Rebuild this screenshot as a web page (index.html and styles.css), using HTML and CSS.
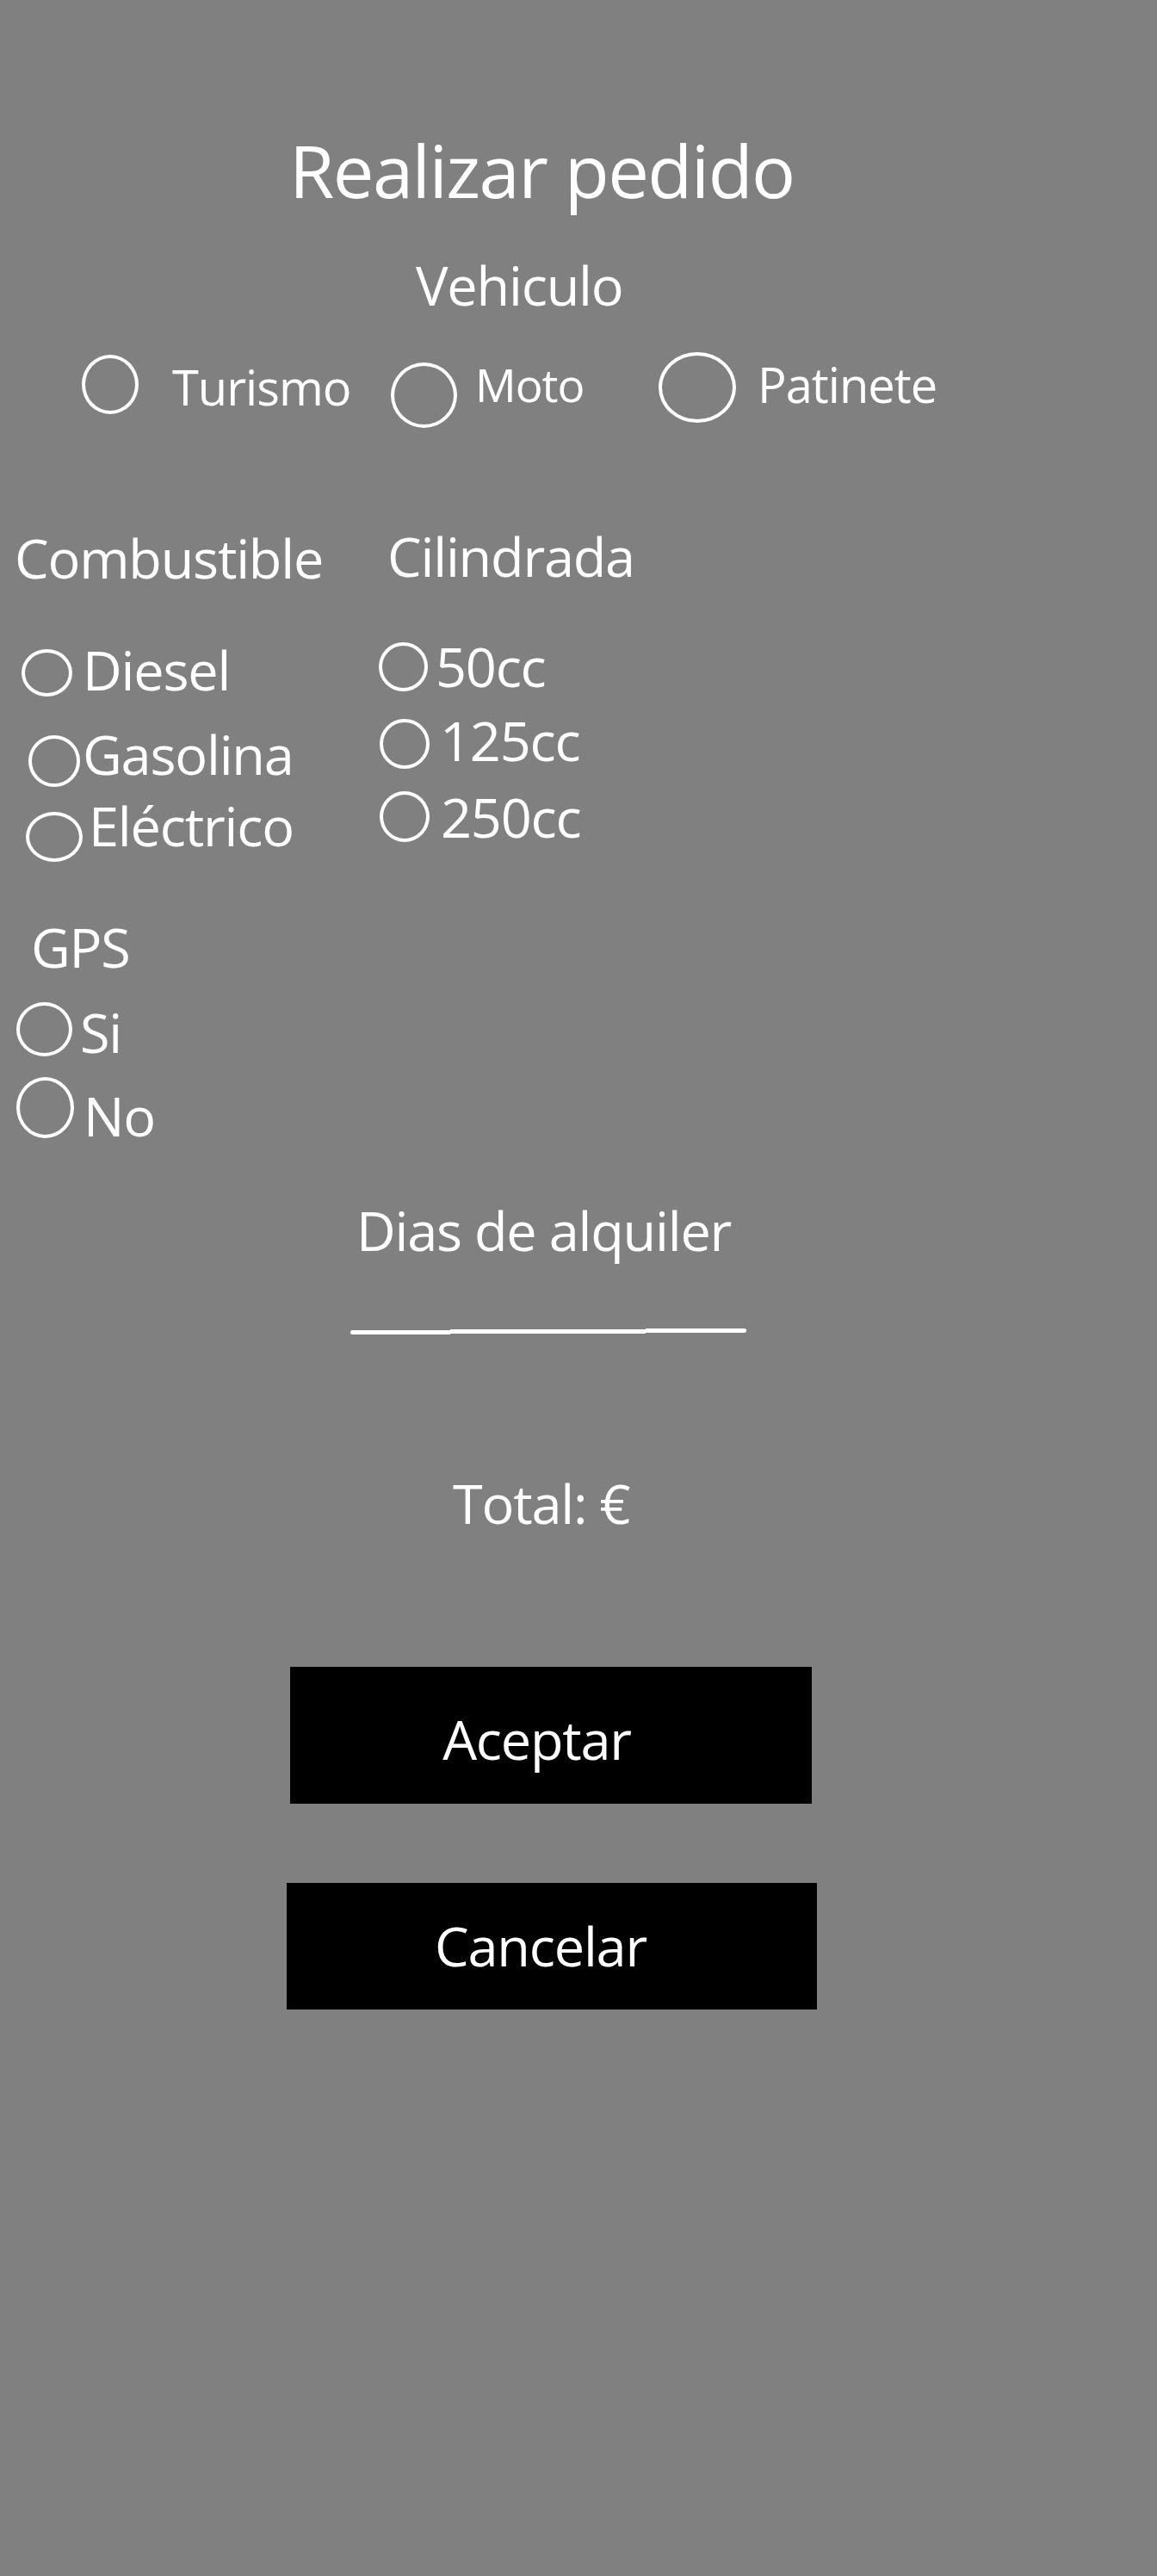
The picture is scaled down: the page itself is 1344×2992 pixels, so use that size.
FILE: index.html
```html
<!DOCTYPE html>
<html lang="es">
<head>
<meta charset="utf-8">
<title>Realizar pedido</title>
<link rel="stylesheet" href="styles.css">
</head>
<body>
<main class="page">
  <h1 class="title">Realizar pedido</h1>

  <section class="vehiculo">
    <h2 class="label label-vehiculo">Vehiculo</h2>
    <div class="veh-row">
      <div class="veh-opt veh-opt-1">
        <span class="radio r-turismo"></span>
        <span class="opt-text t-turismo">Turismo</span>
      </div>
      <div class="veh-opt veh-opt-2">
        <span class="radio r-moto"></span>
        <span class="opt-text t-moto">Moto</span>
      </div>
      <div class="veh-opt veh-opt-3">
        <span class="radio r-patinete"></span>
        <span class="opt-text t-patinete">Patinete</span>
      </div>
    </div>
  </section>

  <section class="cols">
    <div class="col col-comb">
      <h2 class="label label-comb">Combustible</h2>
      <div class="row row-diesel">
        <span class="radio r-diesel"></span>
        <span class="text t-diesel">Diesel</span>
      </div>
      <div class="row row-gasolina">
        <span class="radio r-gasolina"></span>
        <span class="text t-gasolina">Gasolina</span>
      </div>
      <div class="row row-electrico">
        <span class="radio r-electrico"></span>
        <span class="text t-electrico">Eléctrico</span>
      </div>
    </div>
    <div class="col col-cil">
      <h2 class="label label-cil">Cilindrada</h2>
      <div class="row row-50">
        <span class="radio r-50"></span>
        <span class="text t-50">50cc</span>
      </div>
      <div class="row row-125">
        <span class="radio r-125"></span>
        <span class="text t-125">125cc</span>
      </div>
      <div class="row row-250">
        <span class="radio r-250"></span>
        <span class="text t-250">250cc</span>
      </div>
    </div>
  </section>

  <section class="gps">
    <h2 class="label label-gps">GPS</h2>
    <div class="row row-si">
      <span class="radio r-si"></span>
      <span class="text t-si">Si</span>
    </div>
    <div class="row row-no">
      <span class="radio r-no"></span>
      <span class="text t-no">No</span>
    </div>
  </section>

  <section class="dias">
    <h2 class="label label-dias">Dias de alquiler</h2>
    <div class="underline">
      <span class="seg seg-1"></span>
      <span class="seg seg-2"></span>
      <span class="seg seg-3"></span>
    </div>
  </section>

  <p class="label total">Total: €</p>

  <div class="actions">
    <button class="btn btn-aceptar" type="button">Aceptar</button>
    <button class="btn btn-cancelar" type="button">Cancelar</button>
  </div>
</main>
</body>
</html>
```

FILE: styles.css
```css
html, body {
  margin: 0;
  padding: 0;
}

body {
  background: #808080;
  color: #ffffff;
  font-family: "Open Sans", "Noto Sans", "DejaVu Sans", sans-serif;
  min-height: 2992px;
}

.page {
  padding-top: 155px;
}

h1, h2, p {
  margin: 0;
  font-weight: 400;
}

.title {
  font-size: 85px;
  line-height: 85px;
  margin-left: 341px;
  letter-spacing: -1.6px;
  text-indent: -5px;
}

.label,
.text,
.opt-text {
  display: block;
  font-size: 63px;
  line-height: 63px;
  letter-spacing: -1.2px;
  white-space: nowrap;
}

.label,
.text {
  text-indent: -4px;
}

.opt-text {
  font-size: 56px;
  line-height: 56px;
  letter-spacing: -1px;
}

.radio {
  display: block;
  flex: none;
  box-sizing: border-box;
  border: 4px solid #ffffff;
  border-radius: 50%;
}

/* Vehiculo */
.label-vehiculo {
  margin-top: 59px;
  margin-left: 487px;
}

.veh-row {
  display: flex;
  align-items: flex-start;
  margin-top: 47px;
}

.veh-opt {
  display: flex;
  align-items: flex-start;
  flex: none;
}

.veh-opt-1 { margin-left: 95px; width: 359px; }
.veh-opt-2 { width: 311px; }

.r-turismo { width: 66px; height: 69px; margin-top: 3px; }
.t-turismo { margin-left: 39px; margin-top: 12px; }

.r-moto { width: 77px; height: 76px; margin-top: 12px; }
.t-moto { margin-left: 21px; margin-top: 11px; font-size: 53px; line-height: 53px; }

.r-patinete { width: 90px; height: 82px; margin-top: 0; }
.t-patinete { margin-left: 25px; margin-top: 9px; }

/* Columns */
.cols {
  display: flex;
  align-items: flex-start;
  margin-top: 117px;
}

.col-comb { width: 440px; flex: none; }
.col-cil { flex: none; }

.row {
  display: flex;
  align-items: flex-start;
}

.label-comb { margin-top: 2px; margin-left: 21px; }

.row-diesel { margin-top: 64px; }
.r-diesel { width: 59px; height: 55px; margin-left: 25px; margin-top: 11px; }
.t-diesel { margin-left: 16px; margin-top: 3px; }

.row-gasolina { margin-top: 35px; }
.r-gasolina { width: 60px; height: 60px; margin-left: 33px; margin-top: 10px; }
.t-gasolina { margin-left: 7px; }

.row-electrico { margin-top: 13px; }
.r-electrico { width: 66px; height: 58px; margin-left: 30px; margin-top: 16px; }
.t-electrico { margin-left: 11px; }

.label-cil { margin-left: 14px; }

.row-50 { margin-top: 65px; }
.r-50 { width: 57px; height: 57px; margin-top: 4px; }
.t-50 { margin-left: 13px; }

.row-125 { margin-top: 23px; }
.r-125 { width: 58px; height: 58px; margin-left: 1px; margin-top: 7px; }
.t-125 { margin-left: 16px; }

.row-250 { margin-top: 24px; }
.r-250 { width: 58px; height: 59px; margin-left: 1px; margin-top: 2px; }
.t-250 { margin-left: 17px; }

/* GPS */
.label-gps { margin-top: 67px; margin-left: 40px; }

.row-si { margin-top: 33px; }
.r-si { width: 65px; height: 63px; margin-left: 19px; }
.t-si { margin-left: 13px; margin-top: 3px; }

.row-no { margin-top: 21px; }
.r-no { width: 67px; height: 71px; margin-left: 19px; }
.t-no { margin-left: 15px; margin-top: 13px; }

/* Dias */
.label-dias { margin-top: 70px; margin-left: 418px; }

.underline {
  display: flex;
  align-items: flex-start;
  margin-top: 83px;
  margin-left: 407px;
}

.seg {
  display: block;
  height: 5px;
  background: #ffffff;
}

.seg-1 { width: 116px; margin-top: 2px; border-radius: 3px 0 0 3px; }
.seg-2 { width: 227px; margin-top: 1px; }
.seg-3 { width: 117px; margin-top: 0; border-radius: 0 3px 3px 0; }

.total {
  margin-top: 164px;
  margin-left: 530px;
}

/* Buttons */
.actions {
  display: flex;
  flex-direction: column;
  align-items: flex-start;
}

.btn {
  display: block;
  box-sizing: border-box;
  border: 0;
  background: #000000;
  color: #ffffff;
  font-family: inherit;
  font-size: 63px;
  line-height: 63px;
  letter-spacing: -1.2px;
  text-align: center;
  cursor: pointer;
}

.btn-aceptar {
  margin-top: 159px;
  margin-left: 337px;
  width: 606px;
  height: 159px;
  padding: 8px 33px 0 0;
}

.btn-cancelar {
  margin-top: 92px;
  margin-left: 333px;
  width: 616px;
  height: 147px;
  padding: 0 26px 2px 0;
}
```
